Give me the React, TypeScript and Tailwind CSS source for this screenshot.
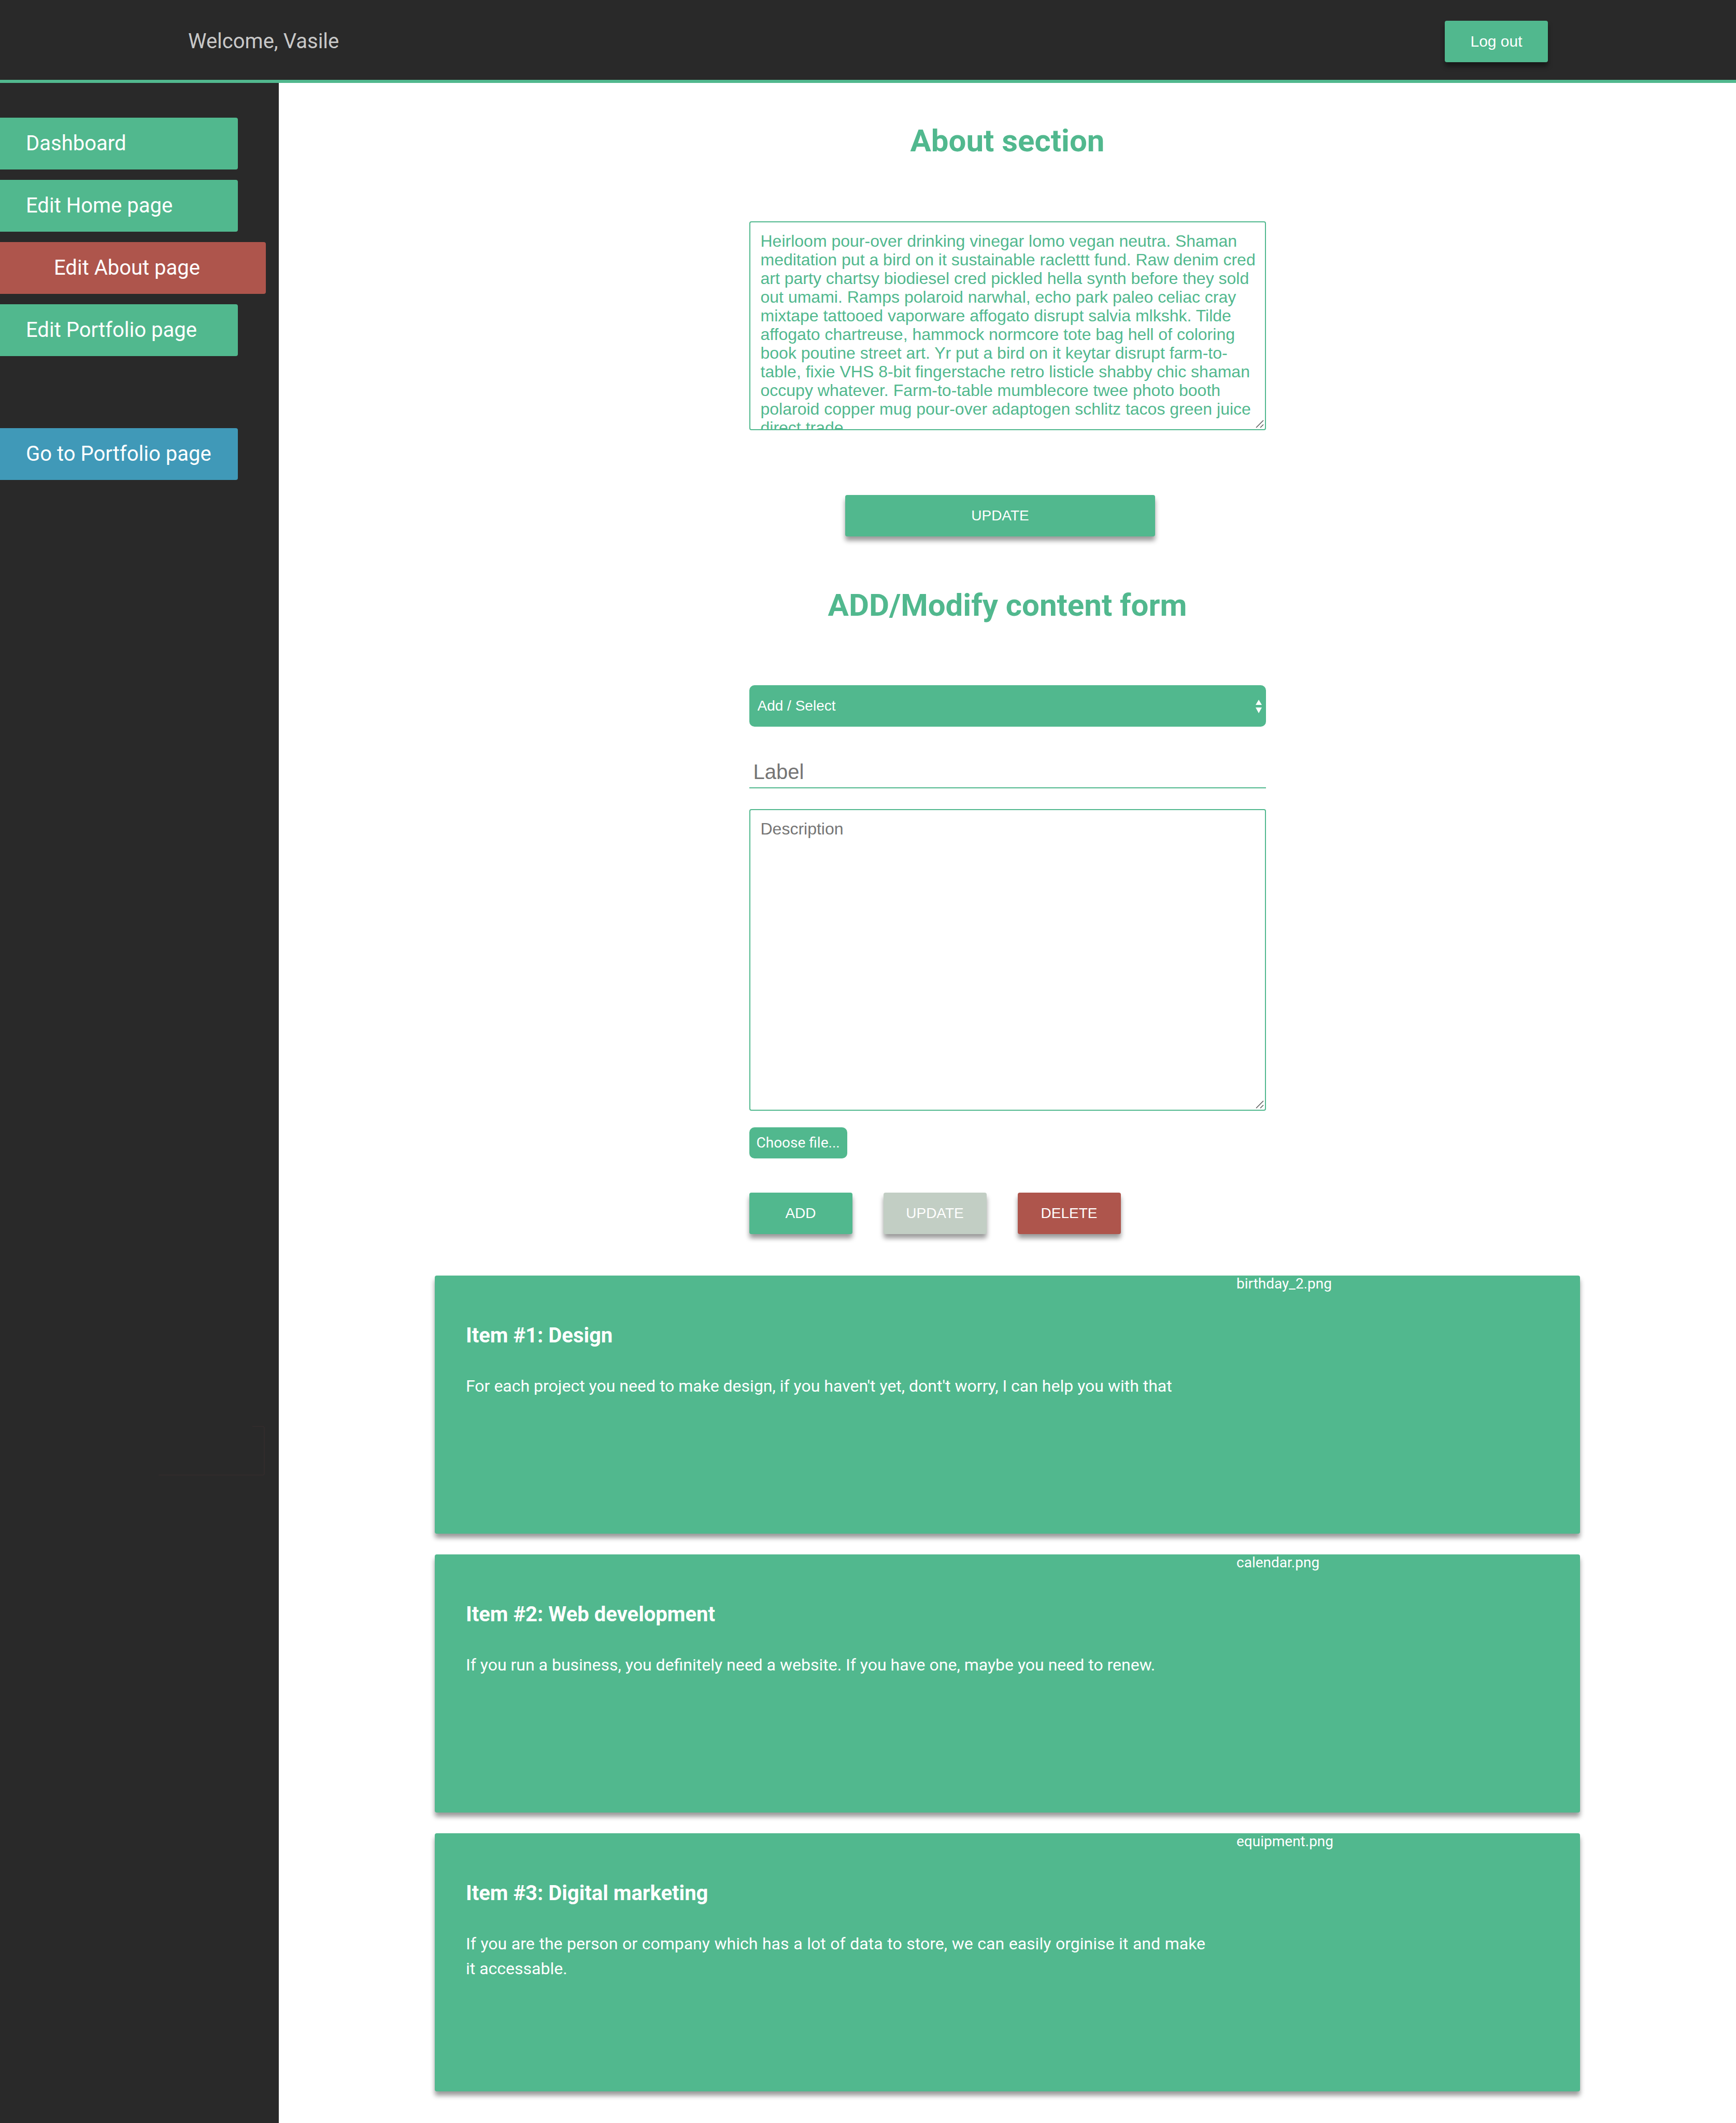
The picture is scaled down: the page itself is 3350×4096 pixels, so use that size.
import { useState } from "react";

const navItems = [
  { label: "Dashboard", active: false },
  { label: "Edit Home page", active: false },
  { label: "Edit About page", active: true },
  { label: "Edit Portfolio page", active: false },
];

const items = [
  {
    title: "Item #1: Design",
    text: "For each project you need to make design, if you haven't yet, dont't worry, I can help you with that",
    file: "birthday_2.png",
  },
  {
    title: "Item #2: Web development",
    text: "If you run a business, you definitely need a website. If you have one, maybe you need to renew.",
    file: "calendar.png",
  },
  {
    title: "Item #3: Digital marketing",
    text: "If you are the person or company which has a lot of data to store, we can easily orginise it and make it accessable.",
    file: "equipment.png",
  },
];

const aboutText =
  "Heirloom pour-over drinking vinegar lomo vegan neutra. Shaman meditation put a bird on it sustainable raclettt fund. Raw denim cred art party chartsy biodiesel cred pickled hella synth before they sold out umami. Ramps polaroid narwhal, echo park paleo celiac cray mixtape tattooed vaporware affogato disrupt salvia mlkshk. Tilde affogato chartreuse, hammock normcore tote bag hell of coloring book poutine street art. Yr put a bird on it keytar disrupt farm-to-table, fixie VHS 8-bit fingerstache retro listicle shabby chic shaman occupy whatever. Farm-to-table mumblecore twee photo booth polaroid copper mug pour-over adaptogen schlitz tacos green juice direct trade.";

const buttonBase =
  "h-20 rounded-[4px] text-white text-[28px] leading-8 font-['Liberation_Sans',Arial,sans-serif] shadow-[0_8px_10px_rgba(0,0,0,0.4)]";

const textareaBase =
  "block w-full resize-none overflow-hidden rounded-[4px] border-2 border-[#51b88e] bg-white pl-5 pr-2 pt-[18px] text-[32px] leading-9 outline-none font-['Liberation_Sans',Arial,sans-serif]";

function ResizeGrip() {
  return (
    <svg
      className="pointer-events-none absolute right-1 bottom-1 h-4 w-4"
      viewBox="0 0 16 16"
      fill="none"
      stroke="#555"
      strokeWidth="1.5"
      aria-hidden="true"
    >
      <path d="M1 15 15 1M9 15l6-6" />
    </svg>
  );
}

function Header() {
  return (
    <header className="flex h-40 items-center justify-between border-b-6 border-[#51b88e] bg-[#292929] px-[363px] pt-1.5">
      <p className="text-[40px] leading-[48px] text-[#c8c8c8]">Welcome, Vasile</p>
      <button
        type="button"
        className="h-20 w-[199px] rounded-[4px] bg-[#51b88e] font-['Liberation_Sans',Arial,sans-serif] text-[30px] leading-9 text-white shadow-[0_8px_10px_rgba(0,0,0,0.4)]"
      >
        Log out
      </button>
    </header>
  );
}

function Sidebar() {
  return (
    <nav className="w-[538px] shrink-0 bg-[#292929] pt-[67px] text-[40px] leading-[48px] text-white">
      <ul className="flex flex-col gap-5">
        {navItems.map((item) => (
          <li key={item.label}>
            <a
              href="#"
              className={
                item.active
                  ? "flex h-[100px] w-[513px] items-center rounded-r-[4px] bg-[#ae554c] pl-[104px]"
                  : "flex h-[100px] w-[459px] items-center rounded-r-[4px] bg-[#51b88e] pl-[50px]"
              }
            >
              {item.label}
            </a>
          </li>
        ))}
      </ul>
      <a
        href="#"
        className="mt-[139px] flex h-[100px] w-[459px] items-center rounded-r-[4px] bg-[#4099b8] pl-[50px]"
      >
        Go to Portfolio page
      </a>
      {/* faint corner outline on the dark panel */}
      <svg
        className="mt-[1825px] ml-[306px] block h-24 w-[205px]"
        viewBox="0 0 205 96"
        fill="none"
        stroke="#3b2f2f"
        aria-hidden="true"
      >
        <path d="M181 1h21l2 2v90l-2 2H0" />
      </svg>
    </nav>
  );
}

function AboutForm() {
  const [text, setText] = useState(aboutText);
  return (
    <form className="mx-auto w-[997px]">
      <h2 className="pt-[76px] text-center text-[60px] leading-[72px] font-bold">
        <label htmlFor="about">About section</label>
      </h2>
      <div className="relative mt-[119px]">
        <textarea
          id="about"
          className={`${textareaBase} h-[403px] text-[#51b88e]`}
          value={text}
          onChange={(e) => setText(e.target.value)}
        />
        <ResizeGrip />
      </div>
      <div className="flex justify-center pt-[125px] pr-7">
        <button type="button" className={`${buttonBase} w-[598px] bg-[#51b88e]`}>
          UPDATE
        </button>
      </div>
    </form>
  );
}

function ContentForm() {
  return (
    <form className="mx-auto w-[997px]">
      <h2 className="pt-[97px] text-center text-[60px] leading-[72px] font-bold">
        ADD/Modify content form
      </h2>
      <div className="relative mt-[118px]">
        <select
          aria-label="Item"
          className="block h-20 w-full appearance-none rounded-[10px] bg-[#51b88e] pl-4 font-['Liberation_Sans',Arial,sans-serif] text-[28px] leading-8 text-white"
        >
          <option>Add / Select</option>
          <option>Item #1: Design</option>
          <option>Item #2: Web development</option>
          <option>Item #3: Digital marketing</option>
        </select>
        <svg
          className="pointer-events-none absolute top-7 right-2 h-[26px] w-3"
          viewBox="0 0 12 26"
          fill="#fff"
          aria-hidden="true"
        >
          <path d="M6 0l6 10H0zM6 26l6-11H0z" />
        </svg>
      </div>
      <input
        type="text"
        aria-label="Label"
        placeholder="Label"
        className="mt-[52px] block h-[67px] w-full border-b-2 border-[#51b88e] bg-white px-2 pt-1.5 font-['Liberation_Sans',Arial,sans-serif] text-[40px] leading-[46px] outline-none placeholder:text-[#757575]"
      />
      <div className="relative mt-10">
        <textarea
          aria-label="Description"
          placeholder="Description"
          className={`${textareaBase} h-[582px] placeholder:text-[#757575]`}
        />
        <ResizeGrip />
      </div>
      <div className="mt-8 flex">
        <label
          htmlFor="file"
          className="flex h-15 cursor-pointer items-center rounded-[10px] bg-[#51b88e] px-[14px] text-[28px] leading-8 text-white"
        >
          Choose file...
        </label>
        <input id="file" type="file" className="sr-only" />
      </div>
      <div className="flex gap-15 pt-[66px]">
        <button type="button" className={`${buttonBase} w-[199px] bg-[#51b88e]`}>
          ADD
        </button>
        <button type="button" className={`${buttonBase} w-[199px] bg-[#c2cec4]`}>
          UPDATE
        </button>
        <button type="button" className={`${buttonBase} w-[199px] bg-[#ae554c]`}>
          DELETE
        </button>
      </div>
    </form>
  );
}

function ItemList() {
  return (
    <ul className="mx-[301px] flex flex-col gap-10 pt-20 pb-[61px] text-white">
      {items.map((item) => (
        <li
          key={item.title}
          className="flex min-h-[498px] rounded-[4px] bg-[#51b88e] shadow-[0_8px_10px_rgba(0,0,0,0.4)]"
        >
          <div className="w-[70%] px-[60px] pt-[92px]">
            <h3 className="text-[40px] leading-[48px] font-bold">{item.title}</h3>
            <p className="mt-[49px] text-justify text-[32px] leading-12">{item.text}</p>
          </div>
          <p className="text-[28px] leading-8">{item.file}</p>
        </li>
      ))}
    </ul>
  );
}

export default function App() {
  return (
    <div className="flex min-h-screen flex-col bg-white font-[Roboto,sans-serif]">
      <Header />
      <div className="flex flex-1">
        <Sidebar />
        <main className="min-w-0 flex-1 text-[#51b88e]">
          <AboutForm />
          <ContentForm />
          <ItemList />
        </main>
      </div>
    </div>
  );
}
